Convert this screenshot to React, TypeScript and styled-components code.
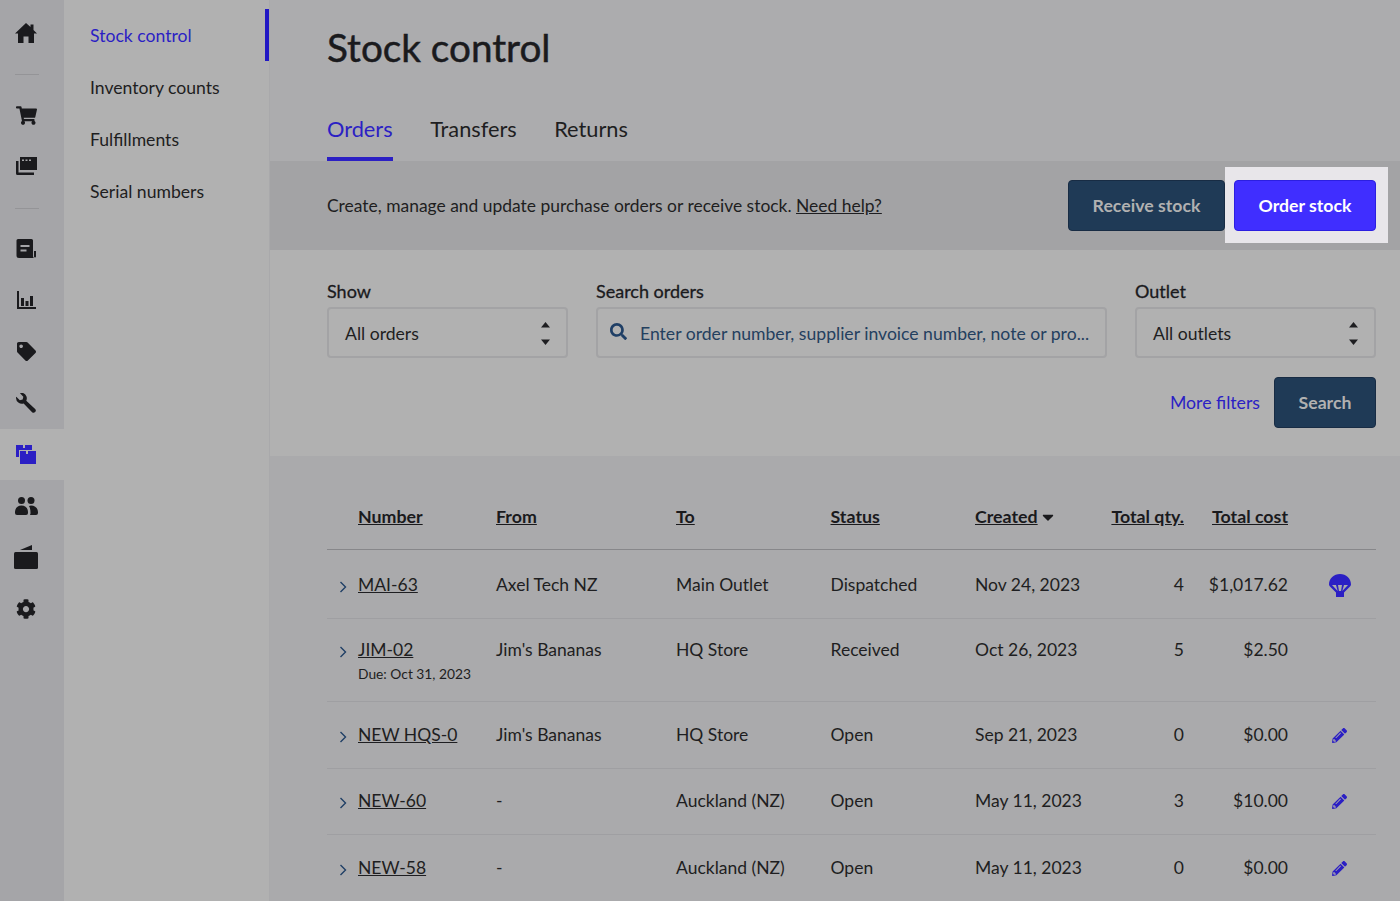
import { FunctionComponent, ReactNode } from 'react';
import styled, { createGlobalStyle } from 'styled-components';
import { FaCaretDown, FaCog, FaPencilAlt, FaSearch, FaShoppingCart, FaTag } from 'react-icons/fa';

const GlobalStyle = createGlobalStyle`
  html, body {
    margin: 0;
    height: 100%;
    overflow: hidden;
    background: #aaaaac;
    font-family: Lato, "Open Sans", sans-serif;
    color: #1e1e21;
  }
`;

const Page = styled.div`
  display: flex;
  width: 1400px;
  height: 901px;
  overflow: hidden;
`;

const Rail = styled.nav`
  width: 64px;
  flex: none;
  background: #a5a5a8;
  padding-top: 7px;
  box-sizing: border-box;
`;

const RailItem = styled.div<{ $active?: boolean }>`
  height: 51.4px;
  display: flex;
  align-items: center;
  justify-content: center;
  padding-right: 12px;
  box-sizing: border-box;
  color: ${(p) => (p.$active ? '#2b1fc4' : '#1a1a1d')};
  background: ${(p) => (p.$active ? '#b1b1b1' : 'transparent')};
`;

const RailDivider = styled.div`
  width: 24px;
  height: 1px;
  background: #949497;
  margin: 15.5px 0 14.5px 15px;
`;

const SubNav = styled.nav`
  width: 206px;
  flex: none;
  background: #b1b1b1;
  border-right: 1px solid #a9a9ab;
  box-sizing: border-box;
  padding-top: 9px;
`;

const SubNavItem = styled.div<{ $active?: boolean }>`
  height: 52px;
  display: flex;
  align-items: center;
  padding-left: 26px;
  font-size: 17.6px;
  color: ${(p) => (p.$active ? '#2b1fc4' : '#1e1e21')};
  box-sizing: border-box;
  border-right: 4px solid ${(p) => (p.$active ? '#2118c4' : 'transparent')};
`;

const Main = styled.main`
  flex: 1;
  min-width: 0;
`;

const Header = styled.header`
  background: #acacae;
  padding: 24px 24px 0 57px;
  height: 161px;
  box-sizing: border-box;
`;

const Title = styled.h1`
  margin: 0;
  font-size: 38.7px;
  line-height: 46px;
  font-weight: 400;
  -webkit-text-stroke: 0.5px #1a1a1d;
  color: #1a1a1d;
`;

const Tabs = styled.div`
  display: flex;
  gap: 37.5px;
  margin-top: 32px;
`;

const Tab = styled.div<{ $active?: boolean }>`
  height: 59px;
  box-sizing: border-box;
  padding-top: 12px;
  line-height: 30px;
  font-size: 21.75px;
  color: ${(p) => (p.$active ? '#2b1fc4' : '#1e1e21')};
  border-bottom: 4px solid ${(p) => (p.$active ? '#2b1fc4' : 'transparent')};
`;

const ActionBand = styled.section`
  height: 89px;
  background: #a3a3a5;
  display: flex;
  align-items: center;
  justify-content: space-between;
  padding: 0 24px 0 57px;
`;

const Intro = styled.p`
  margin: 0 0 1px;
  font-size: 17.45px;
  color: #1e1e21;
`;

const HelpLink = styled.span`
  text-decoration: underline;
`;

const Actions = styled.div`
  display: flex;
  gap: 9px;
`;

const Button = styled.div<{ $primary?: boolean; $width: number }>`
  width: ${(p) => p.$width}px;
  height: 51px;
  box-sizing: border-box;
  display: flex;
  align-items: center;
  justify-content: center;
  padding-bottom: 1px;
  border-radius: 4px;
  font-size: 17.7px;
  font-weight: 700;
  background: ${(p) => (p.$primary ? '#402eff' : '#1f3a56')};
  border: 1px solid ${(p) => (p.$primary ? '#2c1fe0' : '#182c44')};
  color: ${(p) => (p.$primary ? '#ffffff' : '#b1b1b1')};
`;

const Spotlight = styled.div`
  position: relative;
  z-index: 0;

  &::before {
    content: '';
    position: absolute;
    inset: -13px -12px -12px -9px;
    background: #e8e6ea;
    z-index: -1;
  }
`;

const Filters = styled.section`
  height: 206px;
  background: #b1b1b1;
  padding: 29px 24px 0 57px;
  box-sizing: border-box;
`;

const FilterRow = styled.div`
  display: grid;
  grid-template-columns: 241px 511px 241px;
  column-gap: 28px;
`;

const Field = styled.div`
  display: flex;
  flex-direction: column;
`;

const Label = styled.label`
  font-size: 18px;
  font-weight: 400;
  -webkit-text-stroke: 0.3px #1a1a1d;
  line-height: 24px;
  margin-bottom: 4px;
  color: #1a1a1d;
`;

const Control = styled.div`
  height: 51px;
  box-sizing: border-box;
  border: 2px solid #a3a3a5;
  border-radius: 4px;
  display: flex;
  align-items: center;
  padding: 1px 16px 0;
  font-size: 17.6px;
`;

const ControlText = styled.span`
  flex: 1;
`;

const SearchControl = styled(Control)`
  padding: 1px 12px 0 12px;
  gap: 13px;
  color: #1f3f66;
`;

const SearchIcon = styled(FaSearch)`
  flex: none;
  margin-top: -3px;
`;

const Placeholder = styled.span`
  flex: 1;
  min-width: 0;
  white-space: nowrap;
  color: #24405f;
`;

const FilterActions = styled.div`
  display: flex;
  justify-content: flex-end;
  align-items: center;
  gap: 14px;
  margin-top: 19px;
`;

const MoreFilters = styled.span`
  font-size: 17.7px;
  margin-bottom: 1px;
  color: #2b1fc4;
`;

const TableArea = styled.section`
  background: #aaaaac;
  padding: 0 24px 0 57px;
`;

const columns = '31px 138px 180px 154.5px 144.5px 130px 79px 104px 1fr';

const HeadRow = styled.div`
  display: grid;
  grid-template-columns: ${columns};
  height: 94px;
  box-sizing: border-box;
  padding-top: 49px;
  line-height: 22px;
  border-bottom: 1px solid #87878a;
`;

const HeadCell = styled.div<{ $right?: boolean }>`
  font-size: 17.8px;
  font-weight: 700;
  text-decoration: underline;
  text-align: ${(p) => (p.$right ? 'right' : 'left')};
  color: #1a1a1d;
  white-space: nowrap;
`;

const Row = styled.div<{ $height: number; $top: number }>`
  display: grid;
  grid-template-columns: ${columns};
  height: ${(p) => p.$height}px;
  box-sizing: border-box;
  padding-top: ${(p) => p.$top}px;
  line-height: 22px;
  font-size: 17.5px;
  border-bottom: 1px solid #9f9fa2;
`;

const Cell = styled.div<{ $right?: boolean }>`
  text-align: ${(p) => (p.$right ? 'right' : 'left')};
  white-space: nowrap;
`;

const Expand = styled.div`
  padding: 2px 0 0 12px;
  color: #1f3f66;
`;

const OrderLink = styled.span`
  text-decoration: underline;
`;

const DueDate = styled.div`
  font-size: 13.8px;
  line-height: 18px;
  margin-top: 4px;
`;

const RowAction = styled.div`
  display: flex;
  justify-content: center;
  padding-left: 16px;
  color: #2b1fc4;
`;

const EditIcon = styled(FaPencilAlt)`
  margin: 4px 2px 0 0;
`;

const SortCaret = styled(FaCaretDown)`
  margin-left: 1px;
  vertical-align: -3px;
`;

const Stepper = () => (
  <svg width="9" height="23" viewBox="0 0 9 23" fill="#1e1e21">
    <path d="M4.500 0l4.500 5.500H0z" />
    <path d="M4.500 23l4.500-5.500H0z" />
  </svg>
);

const Chevron = () => (
  <svg width="8" height="12" viewBox="0 0 8 12" fill="none" stroke="currentColor" strokeWidth="1.4">
    <path d="M1.500 1l5 5-5 5" />
  </svg>
);

const HomeIcon = () => (
  <svg width="22" height="20" viewBox="0 0 22 20" fill="currentColor">
    <path d="M11 0L0 10.500h3V20h5.500v-6.500h5V20H19v-9.500h3L18.500 7V1.500h-3V4z" />
  </svg>
);

const CardsIcon = () => (
  <svg width="21" height="18" viewBox="0 0 21 18" fill="currentColor">
    <path d="M4 0h17v13H4zM6 2.500v1.600h2V2.500zm3.500 0v1.600h2V2.500zm3.500 0v1.600h2V2.500z" fillRule="evenodd" />
    <path d="M0 4h2.500v11.500H18V18H1.500A1.500 1.500 0 0 1 0 16.500z" />
  </svg>
);

const ReceiptIcon = () => (
  <svg width="20" height="20" viewBox="0 0 20 20" fill="currentColor">
    <path d="M2 0h13.500A1.500 1.500 0 0 1 17 1.500V17a2 2 0 0 0 1 2H3a2.500 2.500 0 0 1-2.500-2.500V1.500A1.500 1.500 0 0 1 2 0zm2.500 6v2h9V6zm0 4.500v2h6v-2z" fillRule="evenodd" />
    <path d="M18 12h2v5.500a1 1 0 0 1-2 0z" />
  </svg>
);

const ChartIcon = () => (
  <svg width="19" height="18" viewBox="0 0 19 18" fill="currentColor">
    <path d="M0 0h2v16h17v2H0z" />
    <path d="M4 7h3v8H4zM8.500 10h3v5h-3zM13 5h3v10h-3z" />
  </svg>
);

const WrenchIcon = () => (
  <svg width="20" height="20" viewBox="0 0 21 21" fill="currentColor">
    <path d="M7.500 0a6 6 0 0 1 3.300 8.100l9.300 8.700a2.300 2.300 0 0 1-3.200 3.300L8 11a6.300 6.300 0 0 1-8-6.200l.3-.8L4 7.500 7 6.800 7.700 4 4.200.3C5.300 0 6.400-.2 7.500 0z" />
  </svg>
);

const BoxesIcon = () => (
  <svg width="20" height="19" viewBox="0 0 20 19" fill="currentColor">
    <path d="M0 0h7v3h2V0h7v5H3v7H0z" />
    <path d="M4 6h6v3h2V6h8v13H4z" />
  </svg>
);

const PeopleIcon = () => (
  <svg width="23" height="18" viewBox="0 0 23 18" fill="currentColor">
    <circle cx="6.500" cy="3.500" r="3.500" />
    <circle cx="16" cy="3.500" r="3.500" />
    <path d="M0 15.500C0 11 2.500 8.500 6.500 8.500s6.500 2.500 6.500 7V16a2 2 0 0 1-2 2H2a2 2 0 0 1-2-2z" />
    <path d="M14 9c.7-.3 1.300-.5 2-.5 4 0 7 2.500 7 7V16a2 2 0 0 1-2 2h-6c.5-1 .5-1.500.5-2.500 0-2.500-.5-5-1.500-6.500z" />
  </svg>
);

const WalletIcon = () => (
  <svg width="24" height="24" viewBox="0 0 24 24" fill="currentColor">
    <path d="M6 5l12-5v5z" />
    <rect x="0" y="7" width="24" height="17" rx="1.500" />
  </svg>
);

const ParachuteIcon = () => (
  <svg width="22" height="23" viewBox="0 0 22 23" fill="currentColor">
    <path
      d="M11 0C4.900 0 0 4.500 0 10.500c0 .8.400 1.500 1 2l6 6V23h8v-4.500l6-6c.6-.5 1-1.200 1-2C22 4.500 17.100 0 11 0zM3 11h4l1.700 6zM19 11h-4l-1.700 6zM9 11h4l-1 6h-2z"
      fillRule="evenodd"
    />
  </svg>
);

const railIcons: { key: string; icon: ReactNode; active?: boolean; dividerAfter?: boolean }[] = [
  { key: 'home', icon: <HomeIcon />, dividerAfter: true },
  { key: 'cart', icon: <FaShoppingCart size={21} /> },
  { key: 'cards', icon: <CardsIcon />, dividerAfter: true },
  { key: 'receipt', icon: <ReceiptIcon /> },
  { key: 'chart', icon: <ChartIcon /> },
  { key: 'tag', icon: <FaTag size={19} /> },
  { key: 'wrench', icon: <WrenchIcon /> },
  { key: 'boxes', icon: <BoxesIcon />, active: true },
  { key: 'people', icon: <PeopleIcon /> },
  { key: 'wallet', icon: <WalletIcon /> },
  { key: 'gear', icon: <FaCog size={20} /> },
];

const orders = [
  { number: 'MAI-63', from: 'Axel Tech NZ', to: 'Main Outlet', status: 'Dispatched', created: 'Nov 24, 2023', qty: '4', cost: '$1,017.62', action: 'receive', height: 69, top: 24 },
  { number: 'JIM-02', due: 'Due: Oct 31, 2023', from: "Jim's Bananas", to: 'HQ Store', status: 'Received', created: 'Oct 26, 2023', qty: '5', cost: '$2.50', height: 83, top: 20 },
  { number: 'NEW HQS-0', from: "Jim's Bananas", to: 'HQ Store', status: 'Open', created: 'Sep 21, 2023', qty: '0', cost: '$0.00', action: 'edit', height: 67, top: 22 },
  { number: 'NEW-60', from: '-', to: 'Auckland (NZ)', status: 'Open', created: 'May 11, 2023', qty: '3', cost: '$10.00', action: 'edit', height: 66, top: 21 },
  { number: 'NEW-58', from: '-', to: 'Auckland (NZ)', status: 'Open', created: 'May 11, 2023', qty: '0', cost: '$0.00', action: 'edit', height: 67, top: 22 },
];

const App: FunctionComponent = () => {
  return (
    <Page>
      <GlobalStyle />
      <Rail>
        {railIcons.map((item) => (
          <div key={item.key}>
            <RailItem $active={item.active}>{item.icon}</RailItem>
            {item.dividerAfter && <RailDivider />}
          </div>
        ))}
      </Rail>

      <SubNav>
        <SubNavItem $active>Stock control</SubNavItem>
        <SubNavItem>Inventory counts</SubNavItem>
        <SubNavItem>Fulfillments</SubNavItem>
        <SubNavItem>Serial numbers</SubNavItem>
      </SubNav>

      <Main>
        <Header>
          <Title>Stock control</Title>
          <Tabs>
            <Tab $active>Orders</Tab>
            <Tab>Transfers</Tab>
            <Tab>Returns</Tab>
          </Tabs>
        </Header>

        <ActionBand>
          <Intro>
            Create, manage and update purchase orders or receive stock. <HelpLink>Need help?</HelpLink>
          </Intro>
          <Actions>
            <Button $width={157}>Receive stock</Button>
            <Spotlight>
              <Button $primary $width={142}>Order stock</Button>
            </Spotlight>
          </Actions>
        </ActionBand>

        <Filters>
          <FilterRow>
            <Field>
              <Label>Show</Label>
              <Control>
                <ControlText>All orders</ControlText>
                <Stepper />
              </Control>
            </Field>
            <Field>
              <Label>Search orders</Label>
              <SearchControl>
                <SearchIcon size={17} />
                <Placeholder>Enter order number, supplier invoice number, note or pro...</Placeholder>
              </SearchControl>
            </Field>
            <Field>
              <Label>Outlet</Label>
              <Control>
                <ControlText>All outlets</ControlText>
                <Stepper />
              </Control>
            </Field>
          </FilterRow>
          <FilterActions>
            <MoreFilters>More filters</MoreFilters>
            <Button $width={102}>Search</Button>
          </FilterActions>
        </Filters>

        <TableArea>
          <HeadRow>
            <div />
            <HeadCell>Number</HeadCell>
            <HeadCell>From</HeadCell>
            <HeadCell>To</HeadCell>
            <HeadCell>Status</HeadCell>
            <HeadCell>Created<SortCaret size={18} /></HeadCell>
            <HeadCell $right>Total qty.</HeadCell>
            <HeadCell $right>Total cost</HeadCell>
            <div />
          </HeadRow>
          {orders.map((order) => (
            <Row key={order.number} $height={order.height} $top={order.top}>
              <Expand><Chevron /></Expand>
              <Cell>
                <OrderLink>{order.number}</OrderLink>
                {order.due && <DueDate>{order.due}</DueDate>}
              </Cell>
              <Cell>{order.from}</Cell>
              <Cell>{order.to}</Cell>
              <Cell>{order.status}</Cell>
              <Cell>{order.created}</Cell>
              <Cell $right>{order.qty}</Cell>
              <Cell $right>{order.cost}</Cell>
              <RowAction>
                {order.action === 'receive' && <ParachuteIcon />}
                {order.action === 'edit' && <EditIcon size={15} />}
              </RowAction>
            </Row>
          ))}
        </TableArea>
      </Main>
    </Page>
  );
};

export default App;
